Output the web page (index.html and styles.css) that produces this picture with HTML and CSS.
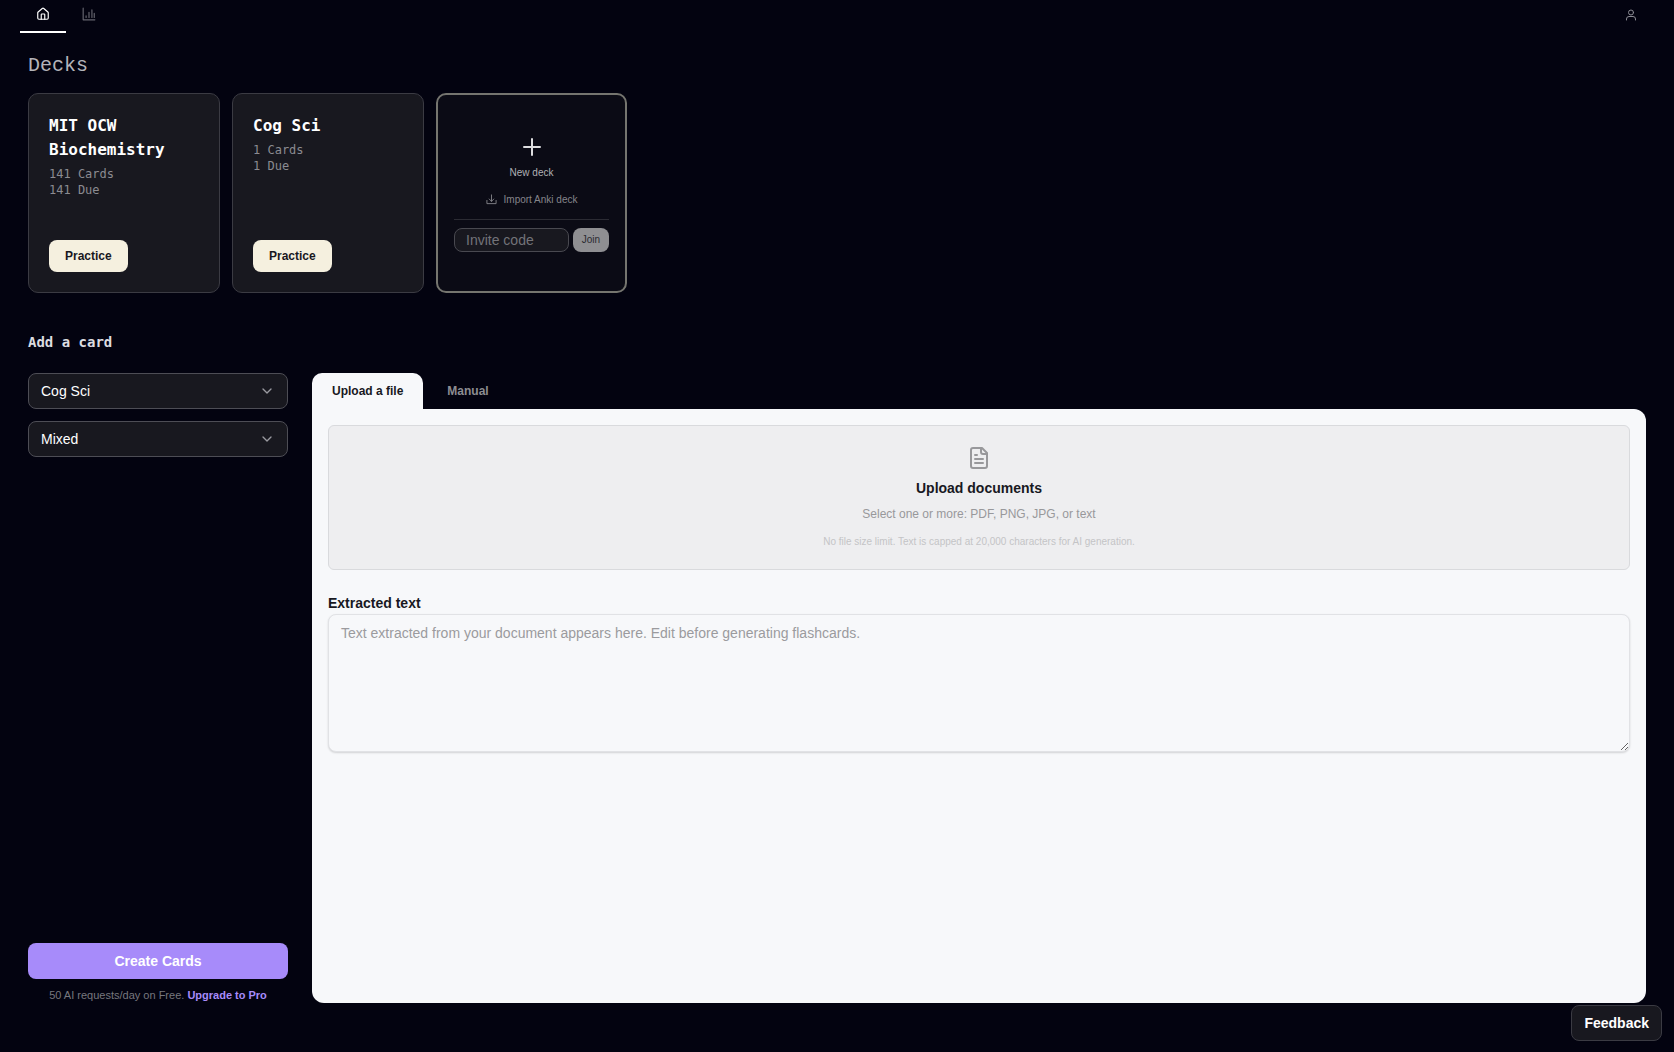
FILE: index.html
```html
<!DOCTYPE html>
<html lang="en">
  <head>
    <meta charset="UTF-8" />
    <title>Decks</title>
    <meta name="viewport" content="width=device-width, initial-scale=1.0" />
    <link rel="stylesheet" href="styles.css">
  </head>
  <body>
    <nav class="navbar">
      <a class="nav-tab active" href="#" aria-label="Home">
        <svg class="icon-sm" viewBox="0 0 24 24"><path d="M15 21v-8a1 1 0 0 0-1-1h-4a1 1 0 0 0-1 1v8" /><path d="M3 10a2 2 0 0 1 .7-1.5l7-6a2 2 0 0 1 2.6 0l7 6A2 2 0 0 1 21 10v9a2 2 0 0 1-2 2H5a2 2 0 0 1-2-2z" /></svg>
      </a>
      <a class="nav-tab" href="#" aria-label="Stats">
        <svg class="icon-sm" viewBox="0 0 24 24"><path d="M2 2v20h20M7 18v-3M12 18V9M17 18V5M21 18v-7" /></svg>
      </a>
      <a class="nav-user" href="#" aria-label="Account">
        <svg class="icon-sm" viewBox="0 0 24 24"><circle cx="12" cy="7" r="5" /><path d="M3 22v-2a5 5 0 0 1 5-5h8a5 5 0 0 1 5 5v2" /></svg>
      </a>
    </nav>

    <main class="page">
      <h1>Decks</h1>
      <section class="decks">
        <article class="deck">
          <h2>MIT OCW Biochemistry</h2>
          <p>141 Cards</p>
          <p>141 Due</p>
          <button class="practice" type="button">Practice</button>
        </article>
        <article class="deck">
          <h2>Cog Sci</h2>
          <p>1 Cards</p>
          <p>1 Due</p>
          <button class="practice" type="button">Practice</button>
        </article>
        <article class="deck deck-new">
          <button class="new-deck" type="button">
            <svg class="icon-plus" viewBox="0 0 24 24"><path d="M4 12h16M12 4v16" /></svg>
            New deck
          </button>
          <button class="import-deck" type="button">
            <svg class="icon-xs" viewBox="0 0 24 24"><path d="M12 2v14M7 11l5 5 5-5M2 14v7h20v-7" /></svg>
            Import Anki deck
          </button>
          <form class="invite">
            <input type="text" placeholder="Invite code" aria-label="Invite code" />
            <button type="submit" disabled>Join</button>
          </form>
        </article>
      </section>

      <h3>Add a card</h3>
      <section class="add-card">
        <div class="sidebar">
          <div class="select-box">
            <select aria-label="Deck">
              <option>Cog Sci</option>
              <option>MIT OCW Biochemistry</option>
            </select>
            <svg class="chevron" viewBox="0 0 24 24"><path d="m6 9 6 6 6-6" /></svg>
          </div>
          <div class="select-box">
            <select aria-label="Card type">
              <option>Mixed</option>
            </select>
            <svg class="chevron" viewBox="0 0 24 24"><path d="m6 9 6 6 6-6" /></svg>
          </div>
          <div class="create">
            <button type="button">Create Cards</button>
            <p>50 AI requests/day on Free. <a href="#">Upgrade to Pro</a></p>
          </div>
        </div>

        <div class="editor">
          <div class="tabs">
            <button class="tab active" type="button">Upload a file</button>
            <button class="tab" type="button">Manual</button>
          </div>
          <div class="panel">
            <button class="dropzone" type="button">
              <svg class="icon-file" viewBox="0 0 24 24"><path d="M15 2H6a2 2 0 0 0-2 2v16a2 2 0 0 0 2 2h12a2 2 0 0 0 2-2V7z" /><path d="M14 2v4a2 2 0 0 0 2 2h4" /><path d="M10 9H8M16 13H8M16 17H8" /></svg>
              <span class="drop-title">Upload documents</span>
              <span class="drop-types">Select one or more: PDF, PNG, JPG, or text</span>
              <span class="drop-note">No file size limit. Text is capped at 20,000 characters for AI generation.</span>
            </button>
            <label for="extracted">Extracted text</label>
            <textarea id="extracted" placeholder="Text extracted from your document appears here. Edit before generating flashcards."></textarea>
          </div>
        </div>
      </section>
    </main>

    <button class="feedback" type="button">Feedback</button>
  </body>
</html>
```
FILE: styles.css
```css
* {
  box-sizing: border-box;
}

body {
  margin: 0;
  min-height: 100vh;
  display: flex;
  flex-direction: column;
  background: #030310;
  color: white;
  font-family: "Liberation Sans", Arial, sans-serif;
  font-size: 14px;
  line-height: 20px;
}

h1,
h2,
h3,
p {
  margin: 0;
}

button,
input,
select,
textarea {
  font: inherit;
  margin: 0;
}

button {
  border: none;
  padding: 0;
  background: none;
  color: inherit;
  cursor: pointer;
}

svg {
  display: block;
  fill: none;
  stroke: currentColor;
  stroke-width: 2;
  stroke-linecap: round;
  stroke-linejoin: round;
}

/* top bar */
.navbar {
  display: flex;
  height: 33px;
  padding: 0 36px 0 20px;
}

.nav-tab,
.nav-user {
  display: flex;
  justify-content: center;
  width: 46px;
  padding-top: 7px;
  color: #66666f;
}

.nav-tab.active {
  color: white;
  border-bottom: 2px solid white;
}

.nav-user {
  width: 14px;
  margin-left: auto;
  padding-top: 8px;
  color: #8b8b93;
}

.nav-user svg {
  width: 12px;
}

.icon-sm {
  width: 14px;
  height: 14px;
}

.page {
  flex: 1;
  display: flex;
  flex-direction: column;
  padding: 21px 28px 49px;
}

h2,
h3,
.deck p {
  font-family: "DejaVu Sans Mono", monospace;
}

h1 {
  margin-bottom: 15px;
  font-family: "Liberation Mono", "Courier New", monospace;
  font-size: 20px;
  font-weight: normal;
  line-height: 24px;
  color: #b4b4ba;
}

/* decks */
.decks {
  display: flex;
  flex-wrap: wrap;
  gap: 12px;
}

.deck {
  display: flex;
  flex-direction: column;
  align-items: flex-start;
  width: 192px;
  height: 200px;
  padding: 20px;
  background: #18181f;
  border: 1px solid #3b3b43;
  border-radius: 10px;
}

.deck h2 {
  margin-bottom: 4px;
  font-size: 16px;
  line-height: 24px;
}

.deck p {
  font-size: 12px;
  line-height: 16px;
  color: #8b8b91;
}

.practice {
  height: 32px;
  margin-top: auto;
  padding: 0 16px;
  border-radius: 8px;
  background: #f5f0df;
  color: #18181f;
  font-size: 12px;
  font-weight: bold;
}

.deck-new {
  align-items: stretch;
  justify-content: center;
  width: 191px;
  padding: 0 16px;
  background: #0b0b15;
  border: 2px solid #75756f;
}

.new-deck {
  display: flex;
  flex-direction: column;
  align-items: center;
  gap: 6px;
  color: #b0b0b4;
  font-size: 10px;
  line-height: 16px;
}

.icon-plus {
  width: 24px;
  height: 24px;
  stroke: #dddddf;
}

.import-deck {
  display: flex;
  align-items: center;
  justify-content: center;
  gap: 7px;
  padding: 11px 0;
  color: #85858b;
  font-size: 10px;
  line-height: 16px;
}

.icon-xs {
  width: 11px;
  height: 11px;
}

.invite {
  display: flex;
  gap: 4px;
  padding-top: 8px;
  border-top: 1px solid #2b2b33;
}

.invite input {
  flex: 1;
  min-width: 0;
  height: 24px;
  padding: 0 11px;
  background: #18181f;
  border: 1px solid #494950;
  border-radius: 8px;
  color: white;
}

.invite input::placeholder {
  color: #737379;
}

.invite button {
  padding: 0 9px;
  border-radius: 8px;
  background: #8f8f92;
  color: #2a2a30;
  font-size: 10px;
}

/* add a card */
h3 {
  margin: 39px 0 21px;
  font-size: 14px;
  line-height: 20px;
  color: #dcdce0;
}

.add-card {
  flex: 1;
  display: flex;
  gap: 24px;
}

.sidebar {
  display: flex;
  flex-direction: column;
  gap: 12px;
  width: 260px;
}

.select-box {
  position: relative;
}

.select-box select {
  appearance: none;
  width: 100%;
  height: 36px;
  padding: 0 36px 0 12px;
  background: #18181f;
  border: 1px solid #4d4d55;
  border-radius: 8px;
  color: white;
}

.chevron {
  position: absolute;
  top: 10px;
  right: 13px;
  width: 16px;
  height: 16px;
  color: #9a9aa0;
  pointer-events: none;
}

.create {
  margin-top: auto;
  text-align: center;
}

.create button {
  width: 100%;
  height: 36px;
  border-radius: 8px;
  background: #a78bfa;
  font-weight: bold;
}

.create p {
  padding-top: 8px;
  font-size: 11px;
  line-height: 16px;
  color: #77777e;
}

.create a {
  color: #a78bfa;
  font-weight: bold;
  text-decoration: none;
}

.editor {
  flex: 1;
  min-width: 0;
  display: flex;
  flex-direction: column;
}

.tabs {
  display: flex;
}

.tab {
  height: 36px;
  padding: 0 20px;
  border-radius: 10px 10px 0 0;
  color: #8d8d92;
  font-size: 12px;
  font-weight: bold;
}

.tab.active {
  background: #f7f8fa;
  color: #18181f;
}

.tab + .tab {
  margin-left: 4px;
}

.panel {
  flex: 1;
  display: flex;
  flex-direction: column;
  padding: 16px;
  background: #f7f8fa;
  border-radius: 0 12px 12px 12px;
  color: #18181f;
}

.dropzone {
  display: flex;
  flex-direction: column;
  align-items: center;
  padding: 20px 20px 19px;
  background: #eeeef0;
  border: 1px solid #d9dadd;
  border-radius: 6px;
}

.icon-file {
  width: 24px;
  height: 24px;
  color: #98989b;
}

.drop-title {
  margin-top: 8px;
  font-weight: bold;
}

.drop-types {
  margin-top: 8px;
  font-size: 12px;
  line-height: 16px;
  color: #98989b;
}

.drop-note {
  margin-top: 12px;
  font-size: 10px;
  line-height: 16px;
  color: #c4c4c6;
}

.panel label {
  margin: 23px 0 1px;
  font-weight: bold;
}

.panel textarea {
  height: 138px;
  padding: 8px 12px;
  background: #f7f8fa;
  border: 1px solid #e1e2e5;
  border-radius: 8px;
  box-shadow: 0 1px 2px rgba(0, 0, 0, 0.15);
  resize: vertical;
}

.panel textarea::placeholder {
  color: #9b9b9e;
}

.feedback {
  position: fixed;
  right: 12px;
  bottom: 11px;
  height: 36px;
  padding: 0 12px;
  background: #18181f;
  border: 1px solid #3b3b43;
  border-radius: 8px;
  font-weight: bold;
}
```
